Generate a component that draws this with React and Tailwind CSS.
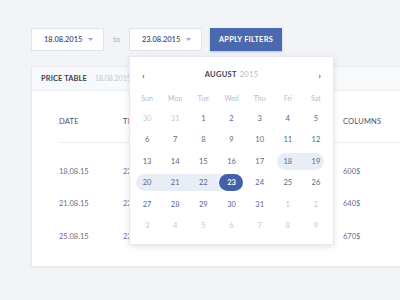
import React from 'react';

const weekDays = ['Sun', 'Mon', 'Tue', 'Wed', 'Thu', 'Fri', 'Sat'];

// [day, muted]
const weeks = [
  [[30, true], [31, true], [1], [2], [3], [4], [5]],
  [[6], [7], [8], [9], [10], [11], [12]],
  [[13], [14], [15], [16], [17], [18], [19]],
  [[20], [21], [22], [23], [24], [25], [26]],
  [[27], [28], [29], [30], [31], [1, true], [2, true]],
  [[3, true], [4, true], [5, true], [6, true], [7, true], [8, true], [9, true]],
];

const rangeStart = [18, 20];
const rangeEnd = [19];
const inRange = [18, 19, 20, 21, 22];

const rows = [
  { date: '18.08.15', time: '22:00', price: '600$' },
  { date: '21.08.15', time: '22:00', price: '640$' },
  { date: '25.08.15', time: '22:00', price: '670$' },
];

const Caret = () => (
  <svg width="5" height="3" viewBox="0 0 5 3" className="block">
    <path d="M0 0h5L2.5 3z" fill="#9aa8cc" />
  </svg>
);

const DateInput = ({ value }) => (
  <div className="w-[73px] h-[23px] bg-white border border-[#dfe3ee] flex items-center pl-[12px] pr-[10px] justify-between">
    <span className="text-[7.5px] font-semibold text-[#44507a] tracking-[0px]">{value}</span>
    <Caret />
  </div>
);

const DayCell = ({ day, muted }) => {
  const range = !muted && inRange.includes(day);
  const isStart = range && rangeStart.includes(day);
  const isEnd = range && rangeEnd.includes(day);
  const selected = !muted && day === 23;

  return (
    <div className="h-[21.4px] flex items-center relative">
      {range && (
        <div
          className={`absolute top-[2.2px] bottom-[2.2px] bg-[#e9edf6] ${
            isStart ? 'left-[3px] rounded-l-full' : 'left-0'
          } ${isEnd ? 'right-[6px] rounded-r-full' : 'right-0'}`}
        />
      )}
      {selected && <div className="absolute top-[2.2px] bottom-[2.2px] left-0 w-1/2 bg-[#e9edf6]" />}
      <div className="relative w-full flex justify-center">
        {selected ? (
          <span className="w-[24px] h-[17px] rounded-full bg-[#4261a7] ring-1 ring-white text-white font-bold text-[7.5px] flex items-center justify-center">
            {day}
          </span>
        ) : (
          <span className={`text-[7.5px] ${muted ? 'text-[#c4c8d3]' : 'text-[#5c6683]'}`}>{day}</span>
        )}
      </div>
    </div>
  );
};

const Calendar = () => (
  <div className="absolute left-[129px] top-[56px] w-[205px] h-[189px] bg-white border border-[#e6e8ee] shadow-[0_2px_6px_rgba(40,50,80,0.12)]">
    <div className="h-[36px] flex items-center justify-between px-[12px]">
      <span className="text-[10px] text-[#3d4250] leading-none">‹</span>
      <span className="text-[7.5px] tracking-[0.3px]">
        <span className="font-bold text-[#3d4250]">AUGUST</span>
        <span className="text-[#b3b7c2] ml-[3px]">2015</span>
      </span>
      <span className="text-[10px] text-[#3d4250] leading-none">›</span>
    </div>
    <div className="px-[3px]">
      <div className="grid grid-cols-7 h-[10px] items-center">
        {weekDays.map(d => (
          <span key={d} className="text-center text-[7px] text-[#b8bcc7]">
            {d}
          </span>
        ))}
      </div>
      <div className="mt-[5px]">
        {weeks.map((week, i) => (
          <div key={i} className="grid grid-cols-7">
            {week.map(([day, muted], j) => (
              <DayCell key={j} day={day} muted={!!muted} />
            ))}
          </div>
        ))}
      </div>
    </div>
  </div>
);

export default function App() {
  return (
    <div className="w-[400px] h-[300px] bg-[#f3f4f7] overflow-hidden relative font-['Lato','Open_Sans',sans-serif]">
      {/* Filters */}
      <div className="flex items-center pt-[28px] pl-[31px]">
        <DateInput value="18.08.2015" />
        <span className="mx-[9px] text-[7.5px] text-[#a3acc4]">to</span>
        <DateInput value="23.08.2015" />
        <button className="ml-[8px] w-[72px] h-[23px] bg-[#4a69ae] text-white text-[7.5px] font-bold tracking-[0.2px] shadow-[0_1px_2px_rgba(40,60,120,0.3)]">
          APPLY FILTERS
        </button>
      </div>

      {/* Price table card */}
      <div className="mt-[15px] ml-[31px] w-[400px] h-[201px] bg-white border border-[#e8eaf0] shadow-[0_1px_2px_rgba(0,0,0,0.04)]">
        <div className="h-[24px] bg-[#f8f9fb] border-b border-[#eceef2] flex items-center pl-[9px]">
          <span className="text-[7.5px] font-bold text-[#3d4250] tracking-[0.1px]">PRICE TABLE</span>
          <span className="ml-[8px] text-[7px] text-[#c1c5cf]">18.08.2015</span>
        </div>
        <div className="pl-[27px]">
          <div className="h-[52px] pt-[11px] flex items-center border-b border-[#eceef2] text-[7.5px] text-[#4a5068] tracking-[0.2px]">
            <span className="w-[64px]">DATE</span>
            <span className="w-[220px]">TIME</span>
            <span>COLUMNS</span>
          </div>
          <div className="pt-[12px]">
            {rows.map(r => (
              <div key={r.date} className="h-[32.5px] flex items-center text-[7.5px] text-[#6a7087]">
                <span className="w-[64px]">{r.date}</span>
                <span className="w-[220px]">{r.time}</span>
                <span>{r.price}</span>
              </div>
            ))}
          </div>
        </div>
      </div>

      <Calendar />
    </div>
  );
}
